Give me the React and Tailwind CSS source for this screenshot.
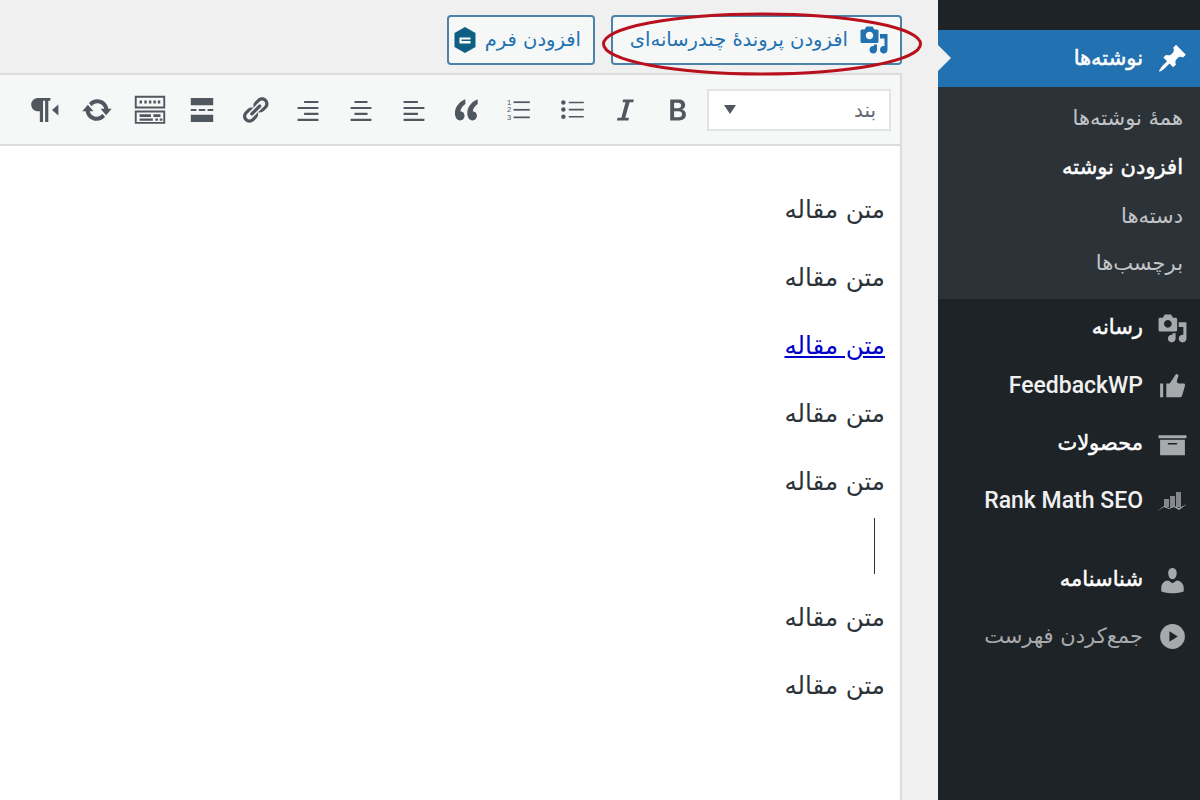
const fa = "font-['DejaVu_Sans',sans-serif]";
const strong = "[-webkit-text-stroke:0.5px_currentColor]";

function Icon({ d, className }) {
    return (
        <svg viewBox="0 0 20 20" fill="currentColor" fillRule="evenodd" className={className}>
            <path d={d} />
        </svg>
    )
}

const pin = "M10.44 3.02l1.82-1.82 6.36 6.35-1.83 1.82c-1.05-.68-2.48-.57-3.41.36l-.75.75c-.92.93-1.04 2.35-.35 3.41l-1.83 1.82-2.41-2.41-2.8 2.79c-.42.42-3.38 2.71-3.8 2.29s1.86-3.39 2.28-3.81l2.79-2.79L4.1 9.36l1.83-1.82c1.05.69 2.48.57 3.4-.36l.75-.75c.93-.92 1.05-2.35.36-3.41z";
const media = "M13 11V4c0-.55-.45-1-1-1h-1.67L9 1H5L3.67 3H2c-.55 0-1 .45-1 1v7c0 .55.45 1 1 1h10c.55 0 1-.45 1-1zM7 4.5c1.38 0 2.5 1.12 2.5 2.5S8.38 9.5 7 9.5 4.5 8.38 4.5 7 5.62 4.5 7 4.5zM14 6h5v10.5c0 1.38-1.12 2.5-2.5 2.5S14 17.88 14 16.5s1.12-2.5 2.5-2.5c.17 0 .34.02.5.05V9h-3V6zm-4 8.05V13h2v3.5c0 1.38-1.12 2.5-2.5 2.5S7 17.88 7 16.5 8.12 14 9.5 14c.17 0 .34.02.5.05z";
const thumb = "M12.72 2c.15-.02.26.02.41.07.56.19.83.79.66 1.35-.17.55-1 3.04-1 3.58 0 .53.75 1 1.35 1h3c.6 0 1 .4 1 1s-2 7-2 7c-.17.39-.55 1-1 1H6V8h2.14c.41-.41 3.3-4.71 3.58-5.27.21-.41.6-.68 1-.73zM2 8h2v9H2V8z";
const archive = "M19 4v2H1V4h18zM2 7h16v10H2V7zm11 3V9H7v1h6z";
const user = "M10 9.25c-2.27 0-2.73-3.44-2.73-3.44C7 4.02 7.82 2 9.97 2c2.16 0 2.98 2.02 2.71 3.81 0 0-.41 3.44-2.68 3.44zm0 2.57L12.72 10c2.39 0 4.52 2.33 4.52 4.53v2.49s-3.65 1.13-7.24 1.13c-3.65 0-7.24-1.13-7.24-1.13v-2.49c0-2.25 1.94-4.48 4.47-4.48z";
const play = "M10 2a8 8 0 1 0 0 16a8 8 0 0 0 0-16zM8 6.6v6.8l5.4-3.4z";
const refresh = "M10.2 3.28c3.53 0 6.43 2.61 6.92 6h2.08l-3.5 4-3.5-4h2.32c-.45-1.97-2.21-3.45-4.32-3.45-1.45 0-2.73.71-3.54 1.78L4.95 5.66C6.23 4.2 8.11 3.28 10.2 3.28zm-.4 13.44c-3.52 0-6.43-2.61-6.92-6H.8l3.5-4c1.17 1.33 2.33 2.67 3.5 4H5.48c.45 1.97 2.21 3.45 4.32 3.45 1.45 0 2.73-.71 3.54-1.78l1.71 1.95c-1.28 1.46-3.15 2.38-5.25 2.38z";
const link = "M17.74 2.76c1.68 1.69 1.68 4.41 0 6.1l-1.53 1.52c-1.12 1.12-2.7 1.47-4.14 1.09l2.62-2.61.76-.77.76-.76c.84-.84.84-2.2 0-3.04-.84-.85-2.2-.85-3.04 0l-.77.76-3.38 3.38c-.37-1.44-.02-3.02 1.1-4.14l1.52-1.53c1.69-1.68 4.42-1.68 6.1 0zM8.59 13.43l5.34-5.34c.42-.42.42-1.1 0-1.52-.44-.43-1.13-.39-1.53 0l-5.33 5.34c-.42.42-.42 1.1 0 1.52.44.43 1.13.39 1.52 0zm-.76 2.29l4.14-4.15c.38 1.44.03 3.02-1.09 4.14l-1.52 1.53c-1.69 1.68-4.41 1.68-6.1 0-1.68-1.68-1.68-4.42 0-6.1l1.53-1.52c1.12-1.12 2.7-1.47 4.14-1.1l-4.14 4.15c-.85.84-.85 2.2 0 3.05.84.84 2.2.84 3.04 0z";
const paragraph = "M6 2.500h8v1.700h-1.300V17.500h-2V4.200H9.400V17.500h-2v-6.700H6.300C3.900 10.800 2 9 2 6.700S3.900 2.500 6 2.500zM19 6.500v7l-4-3.500z";
const more = "M3 2.500h14v4.500H3V2.500zm0 10.500h14v4.500H3V13zM3 9.300h3.500v1.400H3V9.300zm5 0h4v1.400H8V9.300zm5.500 0H17v1.400h-3.500V9.300z";
const sink = "M2 2.500h16v6.700H2V2.500zm1 1v4.700h14V3.500H3zM4.500 5h1.300v1.600H4.500V5zm2.500 0h1.300v1.600H7V5zm2.400 0h1.300v1.600H9.400V5zm2.400 0h1.300v1.600h-1.300V5zm2.300 0h1.300v1.600h-1.300V5zM2 10.300h16v7H2v-7zm1 1v5h14v-5H3zm1.500 1h6v1.400h-6v-1.400zm7.300 0h3.700v1.400h-3.700v-1.400zm-7.300 2.200h7v1.200h-7v-1.200zm8.300 0h1.400v1.200h-1.400v-1.200zm2.300 0h1.400v1.200h-1.400v-1.200z";
const alignRight = "M7 3h11v1.700H7V3zM2 7.600h16v1.700H2V7.600zm5 4.600h11v1.700H7v-1.700zM2 16.800h16v1.700H2v-1.700z";
const alignCenter = "M5 3h10v1.700H5V3zM2 7.600h16v1.700H2V7.600zm3 4.600h10v1.700H5v-1.700zM2 16.800h16v1.700H2v-1.700z";
const alignLeft = "M2 3h11v1.700H2V3zM2 7.600h16v1.700H2V7.600zm0 4.600h11v1.700H2v-1.700zM2 16.800h16v1.700H2v-1.700z";
const quote = "M9 2C5.200 3.600 1.500 7.500 1.500 12.500c0 3.200 1.600 5.500 3.900 5.500 2 0 3.500-1.600 3.500-3.600 0-2-1.400-3.400-3.200-3.500.2-2 1.800-4.300 3.800-5.600V2zm9.500 0c-3.800 1.600-7.500 5.500-7.500 10.500 0 3.200 1.600 5.500 3.900 5.500 2 0 3.500-1.600 3.500-3.600 0-2-1.400-3.400-3.200-3.500.2-2 1.800-4.300 3.800-5.600V2z";
const ul = "M2.700 2.500a1.800 1.800 0 1 1 0 3.600a1.800 1.800 0 0 1 0-3.600zm0 5.700a1.800 1.800 0 1 1 0 3.600a1.800 1.800 0 0 1 0-3.600zm0 5.700a1.800 1.800 0 1 1 0 3.600a1.800 1.800 0 0 1 0-3.600zM7 3.700h12v1.300H7V3.700zm0 5.700h12v1.300H7V9.400zm0 5.700h12v1.300H7v-1.300z";
const italic = "M8.500 2h8.300l-.4 2h-2.900L10.200 16h2.800l-.4 2H3.800l.4-2h3L10.400 4H8.100z";
const bold = "M4 2h6.300c3.300 0 5.200 1.500 5.200 4.200 0 1.600-.9 2.900-2.400 3.400 1.900.4 3 1.900 3 3.900 0 2.800-2 4.500-5.400 4.500H4V2zm3 2.500v4.100h3c1.500 0 2.400-.8 2.400-2.100s-.9-2-2.500-2H7zm0 6.400v4.600h3.500c1.700 0 2.600-.8 2.600-2.300s-.9-2.300-2.700-2.300H7z";

function RankIcon() {
    return (
        <svg viewBox="0 0 32 24" fill="currentColor" className="w-[32px] h-[24px] shrink-0 text-[#a7aaad]">
            <path d="M8 9h5v8H8zM14 6h5v11h-5zM20 2h5v15h-5z" opacity="0.75" />
            <path d="M1 21l7-4 5 2 5-2 5 3 8-6-2 1-6 3-5-2-5 2-5-2-7 5z" />
        </svg>
    )
}

function OrderedList() {
    return (
        <svg viewBox="0 0 24 24" fill="currentColor" className="w-[26px] h-[26px]">
            <rect x="7" y="4" width="15" height="1.600" />
            <rect x="7" y="11" width="15" height="1.600" />
            <rect x="7" y="18" width="15" height="1.600" />
            <text x="1" y="7" direction="ltr" fontSize="7" fontFamily="Liberation Sans">1</text>
            <text x="1" y="14" direction="ltr" fontSize="7" fontFamily="Liberation Sans">2</text>
            <text x="1" y="21" direction="ltr" fontSize="7" fontFamily="Liberation Sans">3</text>
        </svg>
    )
}

function GravityIcon({ className }) {
    return (
        <svg viewBox="0 0 22 26" className={className}>
            <path d="M11 0l10.500 6v14L11 26 .5 20V6z" fill="#0e5f82" />
            <path d="M5.500 10.500h11v2h-9v1.500h9v2.500h-11z" fill="#fff" />
        </svg>
    )
}

const toolbar = [bold, italic, ul, "ol", quote, alignLeft, alignCenter, alignRight, link, more, sink, refresh, paragraph];
const sizes = [26, 26, 25, 26, 26, 26, 26, 26, 30, 32, 38, 32, 32];
const sizeCls = { 25: "w-[25px] h-[25px]", 26: "w-[26px] h-[26px]", 30: "w-[30px] h-[30px]", 32: "w-[32px] h-[32px]", 38: "w-[38px] h-[38px]" };

function Toolbar() {
    return (
        <div className="h-[71px] shrink-0 bg-[#f6f7f7] border-b-2 border-[#dcdcde] flex items-center pr-[9px] text-[#50575e]">
            <div className={`w-[184px] h-[42px] shrink-0 bg-white border-2 border-[#e2e3e5] flex items-center justify-between pr-[13px] pl-[15px] text-[20px] text-[#646970] ${fa}`}>
                <span>بند</span>
                <span className="w-0 h-0 border-x-[6px] border-x-transparent border-t-[9px] border-t-[#50575e]"></span>
            </div>
            <div className="flex mr-[3px] items-center">
                {toolbar.map((d, i) => (
                    <div key={i} className="w-[52.800px] h-[40px] shrink-0 flex items-center justify-center">
                        {d === "ol" ? <OrderedList /> : <Icon d={d} className={sizeCls[sizes[i]]} />}
                    </div>
                ))}
            </div>
        </div>
    )
}

function Paragraph({ children }) {
    return <p className="h-[68px] flex items-center text-[24.500px] text-[#2c3338]">{children}</p>
}

function MainItem({ icon, text, h = "h-[58px]", cls = `text-white ${strong}`, iconCls = "text-[#a7aaad]" }) {
    return (
        <div className={`${h} flex items-center pr-[12px] gap-[14px]`}>
            <Icon d={icon} className={`w-[31px] h-[31px] shrink-0 ${iconCls}`} />
            <span className={`text-[21px] whitespace-nowrap ${cls}`}>{text}</span>
        </div>
    )
}

function EnItem({ icon, text, h = "h-[58px]" }) {
    return (
        <div className={`${h} flex items-center pr-[12px] gap-[14px]`}>
            <Icon d={icon} className="w-[31px] h-[31px] shrink-0 text-[#a7aaad]" />
            <span dir="ltr" className="font-['Roboto',sans-serif] text-[23px] font-medium text-[#f0f0f1] whitespace-nowrap">{text}</span>
        </div>
    )
}

function SideBar() {
    return (
        <aside className={`w-[262px] shrink-0 h-full bg-[#1d2327] pt-[30px] ${fa}`}>
            <div className="relative h-[57px] bg-[#2271b1] flex items-center pr-[12px] gap-[14px]">
                <Icon d={pin} className="w-[31px] h-[31px] shrink-0 text-white" />
                <span className={`text-[21px] text-white ${strong}`}>نوشته‌ها</span>
                <span className="absolute left-0 top-[15px] w-0 h-0 border-y-[13px] border-y-transparent border-l-[13px] border-l-[#f0f0f1]"></span>
            </div>
            <div className="bg-[#2c3338] h-[212px] pt-[8px] pr-[17px] text-[21px] text-[#c3c4c7]">
                <div className="h-[48px] flex items-center">همهٔ نوشته‌ها</div>
                <div className={`h-[50px] flex items-center text-white ${strong}`}>افزودن نوشته</div>
                <div className="h-[47px] flex items-center">دسته‌ها</div>
                <div className="h-[48px] flex items-center">برچسب‌ها</div>
            </div>
            <MainItem icon={media} text="رسانه" />
            <EnItem icon={thumb} text="FeedbackWP" />
            <MainItem icon={archive} text="محصولات" />
            <div className="h-[57px] flex items-center pr-[12px] gap-[13px]">
                <RankIcon />
                <span dir="ltr" className="font-['Roboto',sans-serif] text-[23px] font-medium text-[#f0f0f1] whitespace-nowrap">Rank Math SEO</span>
            </div>
            <div className="h-[22px]"></div>
            <MainItem icon={user} text="شناسنامه" h="h-[56px]" />
            <MainItem icon={play} text="جمع‌کردن فهرست" h="h-[57px]" cls="text-[#a7aaad]" iconCls="text-[#a7aaad]" />
        </aside>
    )
}

export default function App() {
    return (
        <div dir="rtl" className={`relative w-[1200px] h-[800px] overflow-hidden flex bg-[#f0f0f1] ${fa}`}>
            <SideBar />
            <main className="w-[938px] h-full pr-[36px] flex flex-col">
                <div className="h-[73px] shrink-0 pt-[15px] flex gap-[16px] items-start">
                    <button className="w-[291px] h-[50px] shrink-0 border-2 border-[#4a82a8] rounded-[4px] bg-[#f6f7f7] text-[#2271b1] text-[19.500px] flex items-center pr-[11px] gap-[11px]">
                        <Icon d={media} className="w-[30px] h-[30px] shrink-0" />
                        <span className="whitespace-nowrap">افزودن پروندهٔ چندرسانه‌ای</span>
                    </button>
                    <button className="w-[148px] h-[50px] shrink-0 border-2 border-[#4a82a8] rounded-[4px] bg-[#f6f7f7] text-[#2271b1] text-[19.500px] flex items-center pr-[12px] gap-[9px]">
                        <span className="whitespace-nowrap">افزودن فرم</span>
                        <GravityIcon className="w-[22px] h-[26px] shrink-0" />
                    </button>
                </div>
                <section className="flex-1 flex flex-col border-t-2 border-r-2 border-[#dcdcde] bg-white overflow-hidden">
                    <Toolbar />
                    <div className="pt-[30px] pr-[15px]">
                        <Paragraph>متن مقاله</Paragraph>
                        <Paragraph>متن مقاله</Paragraph>
                        <Paragraph><a className="text-[#0000c8] underline underline-offset-2">متن مقاله</a></Paragraph>
                        <Paragraph>متن مقاله</Paragraph>
                        <Paragraph>متن مقاله</Paragraph>
                        <div className="h-[68px] pt-[2px] pr-[10px]">
                            <div className="w-px h-[56px] bg-[#2c3338]"></div>
                        </div>
                        <Paragraph>متن مقاله</Paragraph>
                        <Paragraph>متن مقاله</Paragraph>
                    </div>
                </section>
            </main>
            <svg viewBox="0 0 320 64" fill="none" className="absolute left-[602px] top-[12px] w-[320px] h-[64px]">
                <ellipse cx="160" cy="32" rx="158.500" ry="30" stroke="#b8101c" strokeWidth="3" />
            </svg>
        </div>
    )
}
